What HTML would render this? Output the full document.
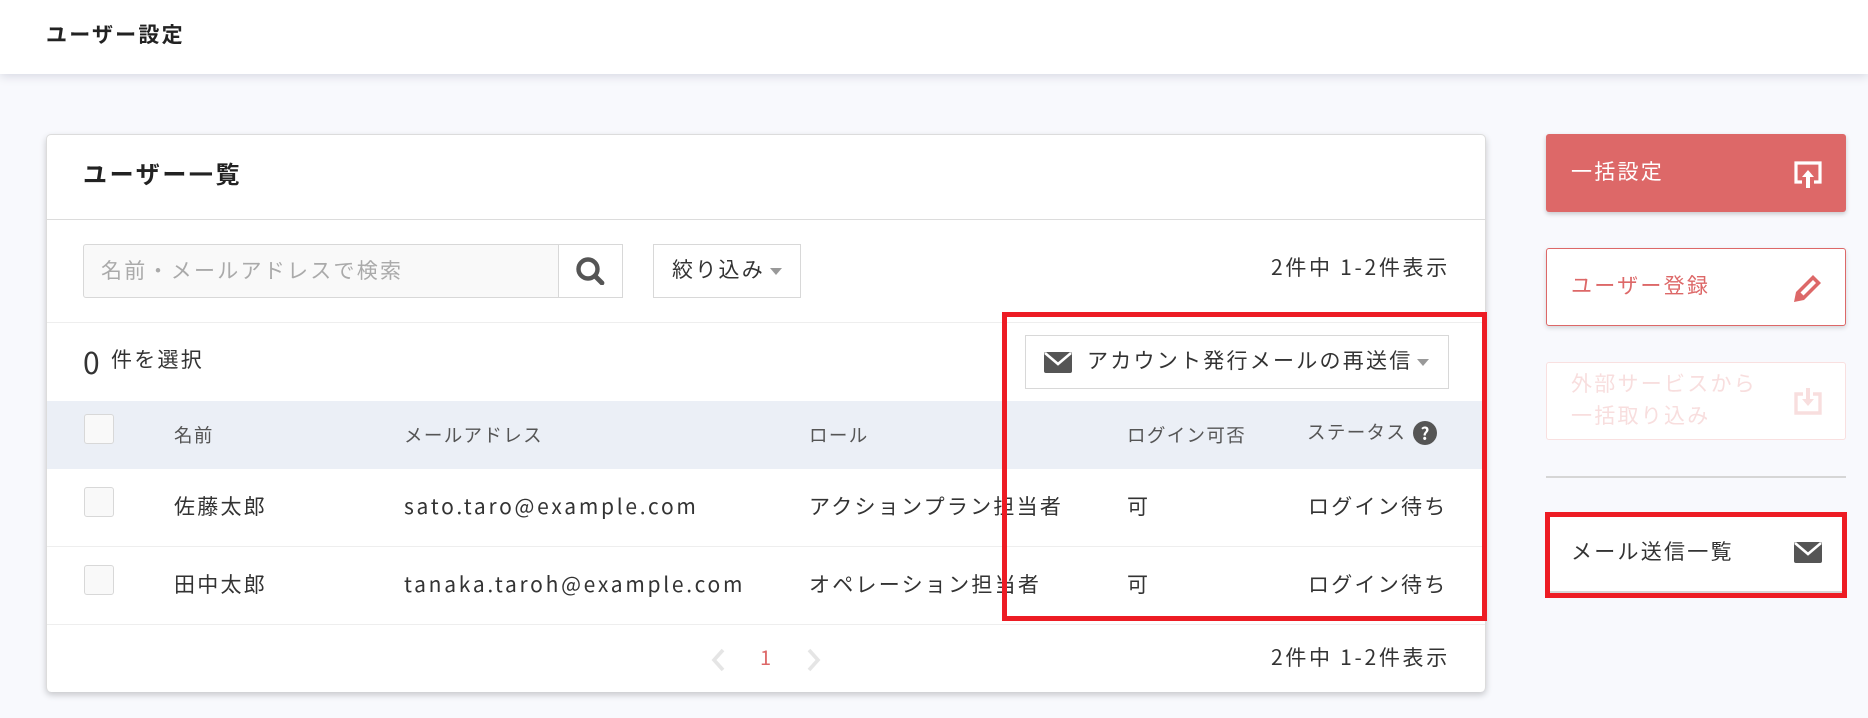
<!DOCTYPE html>
<html lang="ja"><head><meta charset="utf-8"><style>
html,body{margin:0;padding:0}
body{width:1868px;height:718px;overflow:hidden;position:relative;background:#f8f9fd;font-family:"Noto Sans CJK JP","Liberation Sans",sans-serif;color:#333;font-size:21px;letter-spacing:2.25px}
.a{position:absolute;box-sizing:border-box}
.t{position:absolute;white-space:nowrap;line-height:30px;height:30px}
.l{letter-spacing:2.72px}
.c{letter-spacing:2.7px}
.cb{position:absolute;left:84px;width:30px;height:30px;box-sizing:border-box;background:#f9f9f9;border:1px solid #d8d8d8;border-radius:3px}
.th{font-size:18.5px;letter-spacing:1.35px;color:#555}
.tri{position:absolute;width:0;height:0;border-left:6px solid transparent;border-right:6px solid transparent;border-top:7px solid #999}
</style></head><body>
<div class="a" style="left:0;top:0;width:1868px;height:74px;background:#fff;box-shadow:0 2px 10px rgba(0,0,50,.14)"></div>
<div class="t" style="left:46px;top:19px;font-weight:700;font-size:21px;letter-spacing:2.2px;color:#222">ユーザー設定</div>

<div class="a" style="left:46px;top:134px;width:1440px;height:558px;background:#fff;border:1px solid #dcdcdc;border-width:1px 1px 0 1px;border-radius:5px;box-shadow:0 3px 7px rgba(0,0,0,.2)"></div>
<div class="t" style="left:83px;top:158px;font-weight:700;font-size:24px;letter-spacing:2.6px;color:#222">ユーザー一覧</div>
<div class="a" style="left:47px;top:219px;width:1438px;height:1px;background:#dcdcdc"></div>

<div class="a" style="left:83px;top:244px;width:476px;height:54px;background:#f9f9f9;border:1px solid #d8d8d8;border-radius:3px 0 0 3px"></div>
<div class="t" style="left:101px;top:255px;color:#aaa">名前・メールアドレスで検索</div>
<div class="a" style="left:558px;top:244px;width:65px;height:54px;background:#fff;border:1px solid #d8d8d8"></div>
<svg class="a" style="left:576px;top:257px" width="29" height="28" viewBox="0 0 29 28"><circle cx="12" cy="12" r="9.5" fill="none" stroke="#555" stroke-width="4.4"/><path d="M19 19L26 26" stroke="#555" stroke-width="4.8" stroke-linecap="round"/></svg>
<div class="a" style="left:653px;top:244px;width:148px;height:54px;background:#fff;border:1px solid #d8d8d8"></div>
<div class="t" style="left:672px;top:254px">絞り込み</div>
<div class="tri" style="left:770px;top:268px"></div>
<div class="t c" style="left:1271px;top:252px">2件中 1-2件表示</div>

<div class="a" style="left:47px;top:322px;width:1438px;height:1px;background:#eee"></div>
<div class="t" style="left:83px;top:346px;font-size:30px;letter-spacing:0;font-weight:400">0</div>
<div class="t" style="left:111px;top:344px">件を選択</div>
<div class="a" style="left:1025px;top:335px;width:424px;height:54px;background:#fff;border:1px solid #d8d8d8"></div>
<svg class="a" style="left:1044px;top:352px" width="28" height="21" viewBox="0 0 28 21"><rect width="28" height="21" rx="2" fill="#555"/><path d="M1 1L14 12L27 1" fill="none" stroke="#fff" stroke-width="2.6"/></svg>
<div class="t" style="left:1087px;top:345px">アカウント発行メールの再送信</div>
<div class="tri" style="left:1417px;top:359px"></div>

<div class="a" style="left:47px;top:401px;width:1438px;height:68px;background:#ebeff6"></div>
<div class="cb" style="top:414px"></div>
<div class="t th" style="left:174px;top:420px">名前</div>
<div class="t th" style="left:404px;top:420px">メールアドレス</div>
<div class="t th" style="left:809px;top:420px">ロール</div>
<div class="t th" style="left:1127px;top:420px">ログイン可否</div>
<div class="t th" style="left:1307px;top:417px">ステータス</div>
<div class="a" style="left:1413px;top:421px;width:24px;height:24px;border-radius:50%;background:#555;color:#fff;font-size:17px;font-weight:700;line-height:24px;text-align:center;letter-spacing:0">?</div>

<div class="cb" style="top:487px"></div>
<div class="t" style="left:174px;top:491px">佐藤太郎</div>
<div class="t l" style="left:404px;top:491px">sato.taro@example.com</div>
<div class="t" style="left:809px;top:491px">アクションプラン担当者</div>
<div class="t" style="left:1127px;top:491px">可</div>
<div class="t" style="left:1308px;top:491px">ログイン待ち</div>
<div class="a" style="left:47px;top:546px;width:1438px;height:1px;background:#eee"></div>

<div class="cb" style="top:565px"></div>
<div class="t" style="left:174px;top:569px">田中太郎</div>
<div class="t l" style="left:404px;top:569px">tanaka.taroh@example.com</div>
<div class="t" style="left:809px;top:569px">オペレーション担当者</div>
<div class="t" style="left:1127px;top:569px">可</div>
<div class="t" style="left:1308px;top:569px">ログイン待ち</div>
<div class="a" style="left:47px;top:624px;width:1438px;height:1px;background:#eee"></div>

<svg class="a" style="left:710px;top:648px" width="16" height="24" viewBox="0 0 16 24"><path d="M13 2L4 12L13 22" fill="none" stroke="#e5e5e5" stroke-width="3.6"/></svg>
<div class="t" style="left:760px;top:642px;color:#dd6868;font-size:20px;letter-spacing:0">1</div>
<svg class="a" style="left:806px;top:648px" width="16" height="24" viewBox="0 0 16 24"><path d="M3 2L12 12L3 22" fill="none" stroke="#e5e5e5" stroke-width="3.6"/></svg>
<div class="t c" style="left:1271px;top:642px">2件中 1-2件表示</div>

<div class="a" style="left:1546px;top:134px;width:300px;height:78px;background:#dd6868;border-radius:3px;box-shadow:0 2px 5px rgba(0,0,0,.2)"></div>
<div class="t" style="left:1571px;top:156px;color:#fff">一括設定</div>
<svg class="a" style="left:1794px;top:161px" width="28" height="28" viewBox="0 0 28 28"><path d="M8 21H2V2H26V21H20" fill="none" stroke="#fff" stroke-width="3.2"/><path d="M14 9L20 16H16V27H12V16H8Z" fill="#fff"/></svg>

<div class="a" style="left:1546px;top:248px;width:300px;height:78px;background:#fff;border:1px solid #dd6868;border-radius:3px;box-shadow:0 2px 5px rgba(0,0,0,.15)"></div>
<div class="t" style="left:1571px;top:270px;color:#dd6868">ユーザー登録</div>
<svg class="a" style="left:1794px;top:274px" width="28" height="28" viewBox="0 0 28 28"><path d="M0 28L2 18L19 1L27 9L10 26Z" fill="#dd6868"/><path d="M6.500 18.500L19 6L22 9L9.500 21.500Z" fill="#fff"/></svg>

<div class="a" style="left:1546px;top:362px;width:300px;height:78px;background:#fff;border:1px solid #f9e0e0;border-radius:3px"></div>
<div class="t" style="left:1571px;top:368px;color:#f8dede">外部サービスから</div>
<div class="t" style="left:1571px;top:400px;color:#f8dede">一括取り込み</div>
<svg class="a" style="left:1794px;top:388px" width="28" height="27" viewBox="0 0 28 27"><path d="M9 6H2V25H26V6H19" fill="none" stroke="#f8dede" stroke-width="3.4"/><path d="M12 0H16V11H20L14 18L8 11H12Z" fill="#f8dede"/></svg>

<div class="a" style="left:1546px;top:476px;width:300px;height:2px;background:#d6d6d6"></div>

<div class="a" style="left:1546px;top:514px;width:300px;height:79px;background:#fff;border-bottom:2px solid #d6d6d6;border-radius:3px"></div>
<div class="t" style="left:1571px;top:536px">メール送信一覧</div>
<svg class="a" style="left:1794px;top:542px" width="28" height="21" viewBox="0 0 28 21"><rect width="28" height="21" rx="2" fill="#555"/><path d="M1 1L14 12L27 1" fill="none" stroke="#fff" stroke-width="2.6"/></svg>

<div class="a" style="left:1002px;top:312px;width:485px;height:309px;border:5px solid #ed1c24"></div>
<div class="a" style="left:1545px;top:512px;width:302px;height:86px;border:5px solid #ed1c24"></div>
</body></html>
